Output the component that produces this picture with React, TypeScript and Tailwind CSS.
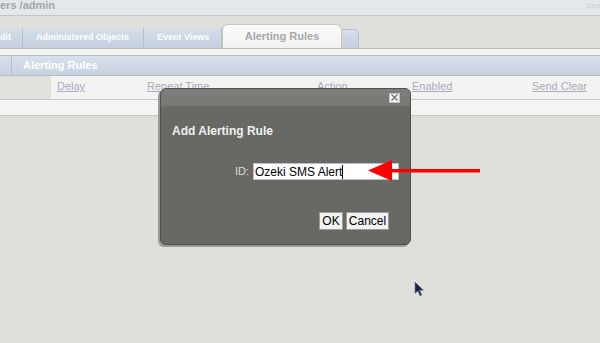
import React from 'react';

const font = { fontFamily: '"Liberation Sans", Arial, sans-serif' };

function Tab({ label, width, pad = 'pl-[13px]' }: { label: string; width: string; pad?: string }) {
  return (
    <div
      className={`${width} h-[20px] flex items-center ${pad} border-r border-[#b9bfc8] bg-gradient-to-b from-[#d6dfea] to-[#c4cfde] text-[9px] font-bold text-white`}
    >
      {label}
    </div>
  );
}

export default function App() {
  return (
    <div className="relative w-[600px] h-[343px] overflow-hidden bg-[#dfdfdc]" style={font}>
      {/* header */}
      <div className="h-[16px] bg-[#e5e8eb] border-b border-[#c4c6c7] flex items-start justify-between">
        <span className="text-[11px] leading-[11px] font-bold text-[#a3a5a8]">ers /admin</span>
        <span className="mt-[1px] text-[8px] leading-[10px] text-[#c9cccf]">Zen</span>
      </div>

      {/* tabs */}
      <div className="h-[33px] flex items-end border-b border-[#b8b8b6]">
        <Tab label="dit" width="w-[23px]" pad="pl-0" />
        <Tab label="Administered Objects" width="w-[121px]" />
        <Tab label="Event Views" width="w-[78px]" />
        <div className="w-[120px] h-[24px] rounded-t-[6px] border border-b-0 border-[#c4c4c2] bg-gradient-to-b from-[#fbfbfa] to-[#f1f2ef] flex items-center justify-center text-[11px] font-bold text-[#a9a9a9]">
          Alerting Rules
        </div>
        <div className="w-[17px] h-[19px] rounded-tr-[5px] border border-b-0 border-l-0 border-[#b9bfc8] bg-gradient-to-b from-[#d6dfea] to-[#c4cfde]" />
      </div>

      <div className="h-[6px] bg-[#f3f4f1]" />

      {/* section bar */}
      <div className="h-[21px] flex border-y border-[#b9bcc0] bg-gradient-to-b from-[#d7e0eb] to-[#c7d2e1]">
        <div className="w-[12px] border-r border-[#b9c2cf]" />
        <div className="pl-[11px] flex items-center text-[11px] font-bold text-white">Alerting Rules</div>
      </div>

      {/* column headers */}
      <div className="h-[24px] flex border-b border-[#c8c9c6] bg-[#f3f4f1] text-[11px] text-[#a9a9c0]">
        <div className="w-[51px] bg-[#e0e0dd]" />
        <div className="relative flex-1">
          <span className="absolute left-[6px] top-[2px] underline">Delay</span>
          <span className="absolute left-[96px] top-[2px] underline">Repeat Time</span>
          <span className="absolute left-[266px] top-[2px]">Action</span>
          <span className="absolute left-[361px] top-[2px] underline">Enabled</span>
          <span className="absolute left-[481px] top-[2px] underline">Send Clear</span>
        </div>
      </div>
      <div className="h-[16px] bg-[#f4f5f2] border-b border-[#c8c9c6]" />

      {/* dialog */}
      <div className="absolute left-[160px] top-[88px] w-[251px] h-[157px] rounded-[6px] border border-[#4f504d] bg-[#686965] shadow-[-2px_2px_0_#9a9b98] flex flex-col">
        <div className="h-[18px] rounded-t-[5px] bg-gradient-to-b from-[#7d7e7a] to-[#777874] border-b border-[#6b6c68] flex justify-end items-center pr-[10px]">
          <div className="w-[11px] h-[10px] bg-[#f4f4f4] border border-[#c0c0c0] flex items-center justify-center">
            <svg width="7" height="7" viewBox="0 0 7 7">
              <path d="M0.5 0.5 L6.5 6.5 M6.5 0.5 L0.5 6.5" stroke="#707070" strokeWidth="1.2" />
            </svg>
          </div>
        </div>
        <div className="pl-[11px] pt-[15px] text-[12px] font-bold text-[#efefef]">Add Alerting Rule</div>
        <div className="mt-[23px] flex items-center justify-end pr-[11px]">
          <span className="text-[11px] text-[#dcdcdc] mr-[4px]">ID:</span>
          <div className="w-[146px] h-[17px] bg-white border border-[#bdbdbd] flex items-center">
            <span className="pl-[1px] text-[12px] leading-[14px] text-black border-r border-black">Ozeki SMS Alert</span>
          </div>
        </div>
        <div className="mt-[32px] flex justify-end gap-[3px] pr-[21px]">
          <button className="w-[24px] h-[18px] bg-[#f2f2f2] border border-[#9c9c9c] text-[12px] text-black leading-none">OK</button>
          <button className="w-[43px] h-[18px] bg-[#f2f2f2] border border-[#9c9c9c] text-[12px] text-black leading-none">Cancel</button>
        </div>
      </div>

      {/* red arrow */}
      <svg className="absolute left-[366px] top-[158px]" width="118" height="26" viewBox="0 0 118 26">
        <path d="M22 11 L114 11 L114 14.5 L22 14.5 Z" fill="#ff0000" />
        <path d="M2 12.5 L26 2 L26 23 Z" fill="#ff0000" />
      </svg>

      {/* cursor */}
      <svg className="absolute left-[414px] top-[281px]" width="11" height="16" viewBox="0 0 11 16">
        <path d="M1 1 L1 12.5 L3.8 10 L6 14.8 L7.8 14 L5.7 9.3 L9.5 9.3 Z" fill="#1d2340" stroke="#7b7f94" strokeWidth="0.6" />
      </svg>
    </div>
  );
}
